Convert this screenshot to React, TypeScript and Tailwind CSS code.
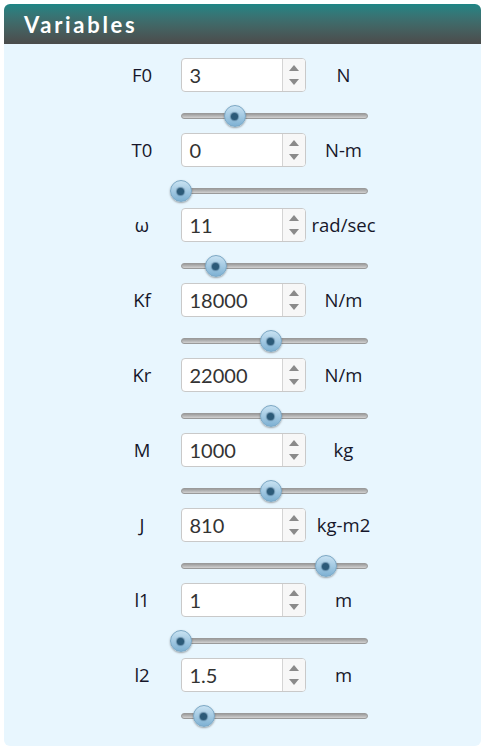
type Variable = {
  label: string;
  value: string;
  unit: string;
  thumb: number; // px offset of thumb centre from track start
};

const variables: Variable[] = [
  { label: "F0", value: "3", unit: "N", thumb: 54 },
  { label: "T0", value: "0", unit: "N-m", thumb: 0 },
  { label: "ω", value: "11", unit: "rad/sec", thumb: 35 },
  { label: "Kf", value: "18000", unit: "N/m", thumb: 90 },
  { label: "Kr", value: "22000", unit: "N/m", thumb: 90 },
  { label: "M", value: "1000", unit: "kg", thumb: 90 },
  { label: "J", value: "810", unit: "kg-m2", thumb: 145 },
  { label: "l1", value: "1", unit: "m", thumb: 0 },
  { label: "l2", value: "1.5", unit: "m", thumb: 23 },
];

function NumberBox({ value }: { value: string }) {
  return (
    <div className="flex h-[34px] w-[125px] overflow-hidden rounded-[4px] border border-[#c9c9c9] bg-white">
      <div className="flex flex-1 items-center pl-[8px] text-[20px] text-[#333] [font-family:Lato,sans-serif]">
        {value}
      </div>
      <div className="flex w-[23px] flex-col items-center justify-center gap-[8px] border-l border-[#d4d4d4] bg-[#f7f7f7]">
        <svg width="10" height="6" viewBox="0 0 10 6">
          <path d="M5 0 L10 6 L0 6 Z" fill="#8a8a8a" />
        </svg>
        <svg width="10" height="6" viewBox="0 0 10 6">
          <path d="M0 0 L10 0 L5 6 Z" fill="#8a8a8a" />
        </svg>
      </div>
    </div>
  );
}

function Slider({ thumb }: { thumb: number }) {
  return (
    <div className="relative h-[22px] w-[187px]">
      <div className="absolute left-0 right-0 top-[8px] h-[6px] rounded-full border border-[#9a9a9a] bg-gradient-to-b from-[#9c9c9c] to-[#d2d2d2]" />
      <div
        className="absolute top-0 flex h-[22px] w-[22px] items-center justify-center rounded-full border border-[#7ba7c4] bg-gradient-to-b from-[#c8e2f2] to-[#7eb1d3] shadow-[0_1px_2px_rgba(0,0,0,0.35)]"
        style={{ left: thumb - 11 }}
      >
        <div className="h-[7px] w-[7px] rounded-full bg-[#2c5a78] shadow-[0_0_1px_1px_rgba(40,80,110,0.5)]" />
      </div>
    </div>
  );
}

function VariableRow({ v }: { v: Variable }) {
  return (
    <div className="flex flex-col">
      <div className="flex h-[34px] items-center">
        <div className="w-[77px] text-center text-[18.5px] text-[#16162a]">{v.label}</div>
        <NumberBox value={v.value} />
        <div className="w-[76px] text-center text-[18.5px] text-[#16162a]">{v.unit}</div>
      </div>
      <div className="mb-[6px] mt-[13px] flex">
        <div className="w-[77px]" />
        <Slider thumb={v.thumb} />
      </div>
    </div>
  );
}

export default function App() {
  return (
    <div className="min-h-screen bg-white p-[4px] [font-family:'Open_Sans',sans-serif]">
      <div className="w-[477px] overflow-hidden rounded-[6px]">
        <div className="flex h-[40px] items-center bg-gradient-to-b from-[#1d8585] to-[#4b4b4b] px-[20px]">
          <h1 className="text-[22px] font-bold tracking-[2.7px] text-white [font-family:Lato,sans-serif]">
            Variables
          </h1>
        </div>
        <div className="flex flex-col items-center bg-[#e8f6fe] pb-[13px] pt-[14px]">
          {variables.map((v) => (
            <VariableRow key={v.label} v={v} />
          ))}
        </div>
      </div>
    </div>
  );
}
